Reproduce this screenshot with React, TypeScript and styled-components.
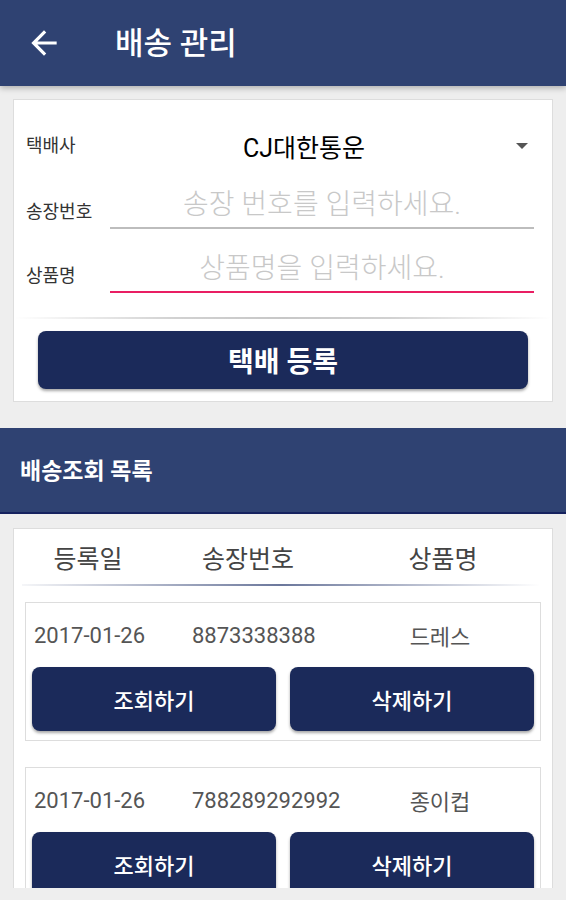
import React from "react";
import styled, { createGlobalStyle } from "styled-components";

const colors = {
  bar: "#2f4272",
  barEdge: "#15215e",
  navy: "#1b2a5a",
  page: "#eeeeee",
  line: "#dddddd",
  label: "#444444",
  text: "#555555",
  hint: "#c8c8c8",
  accent: "#e91e63",
};

const FONT = `Roboto, "Noto Sans CJK KR", "Noto Sans", sans-serif`;

const GlobalStyle = createGlobalStyle`
  html, body {
    margin: 0;
    padding: 0;
    background: ${colors.page};
    font-family: ${FONT};
  }
  * { box-sizing: border-box; }
`;

type Delivery = { date: string; invoice: string; product: string };

const deliveries: Delivery[] = [
  { date: "2017-01-26", invoice: "8873338388", product: "드레스" },
  { date: "2017-01-26", invoice: "788289292992", product: "종이컵" },
];

const BackArrow = () => (
  <svg width="38" height="38" viewBox="0 0 24 24" fill="#ffffff">
    <path d="M20 11H7.83l5.59-5.59L12 4l-8 8 8 8 1.41-1.41L7.83 13H20v-2z" />
  </svg>
);

const App = () => {
  return (
    <Screen>
      <GlobalStyle />
      <AppBar>
        <BackButton>
          <BackArrow />
        </BackButton>
        <Title>{`배송 관리`}</Title>
      </AppBar>

      <Scroller>
        <Card>
          <SpinnerRow>
            <FieldLabel>{`택배사`}</FieldLabel>
            <SpinnerValue>{`CJ대한통운`}</SpinnerValue>
            <Caret />
          </SpinnerRow>
          <FieldRow>
            <FieldLabel>{`송장번호`}</FieldLabel>
            <Input placeholder="송장 번호를 입력하세요." />
          </FieldRow>
          <FieldRow $spaced>
            <FieldLabel>{`상품명`}</FieldLabel>
            <Input $focused placeholder="상품명을 입력하세요." />
          </FieldRow>
          <Divider />
          <PrimaryButton>{`택배 등록`}</PrimaryButton>
        </Card>

        <SectionBar>{`배송조회 목록`}</SectionBar>

        <ListCard>
          <HeadRow>
            <HeadCell>{`등록일`}</HeadCell>
            <HeadCell>{`송장번호`}</HeadCell>
            <HeadCell>{`상품명`}</HeadCell>
          </HeadRow>
          <HeadLine />
          {deliveries.map((d, i) => (
            <Item key={i}>
              <ItemRow>
                <ItemText>{d.date}</ItemText>
                <ItemText>{d.invoice}</ItemText>
                <ItemText $center>{d.product}</ItemText>
              </ItemRow>
              <ItemActions>
                <SmallButton>{`조회하기`}</SmallButton>
                <SmallButton>{`삭제하기`}</SmallButton>
              </ItemActions>
            </Item>
          ))}
        </ListCard>
      </Scroller>
    </Screen>
  );
};

const Screen = styled.div`
  width: 566px;
  height: 900px;
  display: flex;
  flex-direction: column;
  background: ${colors.page};
  overflow: hidden;
`;

const AppBar = styled.header`
  position: relative;
  z-index: 2;
  height: 86px;
  flex: none;
  display: flex;
  align-items: center;
  background: ${colors.bar};
  box-shadow: 0 2px 6px rgba(0, 0, 0, 0.28);
`;

const BackButton = styled.div`
  width: 38px;
  height: 38px;
  margin-left: 25px;
  display: flex;
`;

const Title = styled.h1`
  margin: 0 0 0 52px;
  font-size: 31px;
  font-weight: 500;
  color: #ffffff;
  line-height: 1;
`;

const Scroller = styled.main`
  height: 802px;
  flex: none;
  overflow: hidden;
  padding: 13px 13px 0;
  display: flex;
  flex-direction: column;
`;

const Card = styled.section`
  background: #ffffff;
  border: 1px solid ${colors.line};
  padding: 15px 18px 12px 12px;
  display: flex;
  flex-direction: column;
`;

const SpinnerRow = styled.div`
  height: 60px;
  display: flex;
  align-items: center;
  padding-top: 2px;
`;

const FieldLabel = styled.span`
  width: 84px;
  flex: none;
  font-size: 18px;
  color: #333333;
  line-height: 20px;
`;

const SpinnerValue = styled.span`
  flex: 1;
  text-align: center;
  font-size: 25px;
  color: #000000;
`;

const Caret = styled.span`
  width: 36px;
  flex: none;
  display: flex;
  justify-content: flex-end;
  padding-right: 6px;
  &::after {
    content: "";
    border-left: 6px solid transparent;
    border-right: 6px solid transparent;
    border-top: 6px solid #555555;
  }
`;

const FieldRow = styled.div<{ $spaced?: boolean }>`
  height: 54px;
  margin-top: ${(p) => (p.$spaced ? "10px" : "0")};
  display: flex;
  align-items: flex-end;
  ${FieldLabel} {
    margin-bottom: 7px;
  }
`;

const Input = styled.input<{ $focused?: boolean }>`
  flex: 1;
  min-width: 0;
  height: 100%;
  border: none;
  border-bottom: 2px solid ${(p) => (p.$focused ? colors.accent : "#bdbdbd")};
  outline: none;
  background: transparent;
  text-align: center;
  font-family: ${FONT};
  font-size: 28px;
  font-weight: 300;
  padding: 6px 0 0;
  &::placeholder {
    color: ${colors.hint};
  }
`;

const Divider = styled.div`
  height: 2px;
  margin: 24px -18px 0 -12px;
  background: linear-gradient(
    to right,
    rgba(0, 0, 0, 0),
    rgba(0, 0, 0, 0.18) 30%,
    rgba(0, 0, 0, 0.22) 50%,
    rgba(0, 0, 0, 0.18) 70%,
    rgba(0, 0, 0, 0)
  );
`;

const PrimaryButton = styled.button`
  height: 58px;
  margin: 12px 6px 0 12px;
  border: none;
  border-radius: 8px;
  background: ${colors.navy};
  color: #ffffff;
  font-family: ${FONT};
  font-size: 28px;
  font-weight: 700;
  box-shadow: 0 2px 3px rgba(0, 0, 0, 0.35);
`;

const SectionBar = styled.h2`
  height: 86px;
  flex: none;
  margin: 26px -13px 0;
  padding: 0 20px 2px;
  display: flex;
  align-items: center;
  background: ${colors.bar};
  border-bottom: 2px solid ${colors.barEdge};
  color: #ffffff;
  font-size: 23px;
  font-weight: 700;
`;

const ListCard = styled.section`
  margin-top: 14px;
  background: #ffffff;
  border: 1px solid ${colors.line};
  border-bottom: none;
  padding: 0 11px;
  display: flex;
  flex-direction: column;
`;

const HeadRow = styled.div`
  height: 55px;
  display: grid;
  grid-template-columns: 126px 194px 1fr;
  align-items: center;
`;

const HeadCell = styled.span`
  text-align: center;
  font-size: 25px;
  color: ${colors.label};
`;

const HeadLine = styled.div`
  height: 2px;
  margin: 0 1px 16px -3px;
  background: linear-gradient(
    to right,
    rgba(58, 74, 122, 0.05),
    rgba(58, 74, 122, 0.55) 35%,
    rgba(58, 74, 122, 0.75) 50%,
    rgba(58, 74, 122, 0.45) 70%,
    rgba(58, 74, 122, 0)
  );
`;

const Item = styled.article`
  border: 1px solid ${colors.line};
  padding: 0 6px 9px;
  margin-bottom: 26px;
`;

const ItemRow = styled.div`
  height: 64px;
  display: grid;
  grid-template-columns: 158px 154px 1fr;
  align-items: center;
  padding-left: 2px;
`;

const ItemText = styled.span<{ $center?: boolean }>`
  font-size: 22px;
  color: ${colors.text};
  text-align: ${(p) => (p.$center ? "center" : "left")};
`;

const ItemActions = styled.div`
  display: grid;
  grid-template-columns: 1fr 1fr;
  gap: 14px;
`;

const SmallButton = styled.button`
  height: 64px;
  border: none;
  border-radius: 8px;
  background: ${colors.navy};
  color: #ffffff;
  font-family: ${FONT};
  font-size: 22px;
  font-weight: 500;
  box-shadow: 0 2px 3px rgba(0, 0, 0, 0.35);
`;

export default App;
